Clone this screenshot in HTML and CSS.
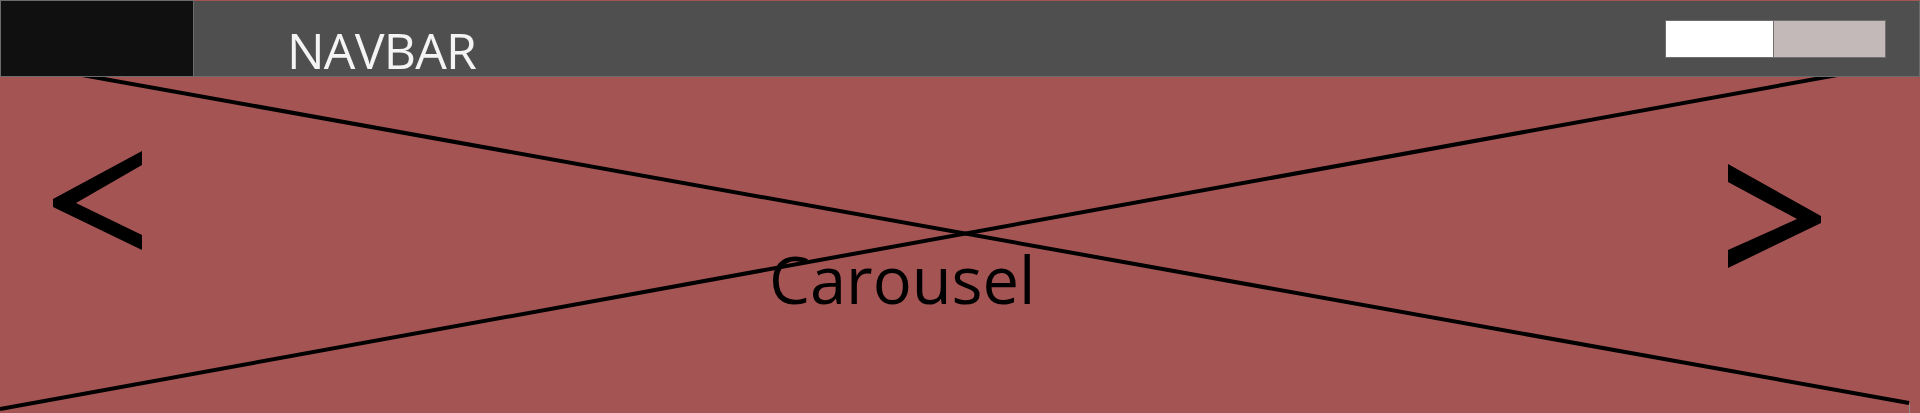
FILE: index.html
```html
<!DOCTYPE html>
<html lang="en">
<head>
<meta charset="utf-8">
<title>Wireframe</title>
<link rel="stylesheet" href="styles.css">
</head>
<body>
<header class="header">
  <div class="logo"></div>
  <nav class="nav">
    <div class="nav-title">NAVBAR</div>
    <div class="nav-buttons">
      <div class="btn btn-light"></div>
      <div class="btn btn-grey"></div>
    </div>
  </nav>
</header>
<section class="carousel">
  <svg class="arrow arrow-left" width="89" height="100" viewBox="53 150 89 100" aria-hidden="true">
    <polygon points="142,151 53,199 53,207 142,250 142,235 76,203 142,165" fill="#000"/>
  </svg>
  <div class="caption-area">
    <div class="caption">Carousel</div>
  </div>
  <svg class="arrow arrow-right" width="93" height="104" viewBox="1728 164 93 104" aria-hidden="true">
    <polygon points="1728,164 1821,216 1821,223 1728,268 1728,250 1797,219 1728,182" fill="#000"/>
  </svg>
  <svg class="cross" width="1920" height="336" viewBox="0 0 1920 336" aria-hidden="true">
    <line x1="0" y1="-16.7" x2="1909" y2="326" stroke="#000" stroke-width="4"/>
    <line x1="0" y1="332" x2="1920" y2="-17" stroke="#000" stroke-width="4"/>
    <line x1="1909.5" y1="327" x2="1909.5" y2="336" stroke="#8a8a8a" stroke-width="1"/>
  </svg>
</section>
</body>
</html>
```
FILE: styles.css
```css
html, body {
  margin: 0;
  padding: 0;
}
body {
  width: 1920px;
  height: 413px;
  overflow: hidden;
  background: #a55454;
  font-family: "Open Sans", "Noto Sans", sans-serif;
}
.header {
  display: flex;
  height: 77px;
}
.logo {
  box-sizing: border-box;
  width: 194px;
  height: 77px;
  background: #101010;
  border: 1px solid #6b6b6b;
}
.nav {
  box-sizing: border-box;
  flex: 1;
  height: 77px;
  display: flex;
  align-items: flex-start;
  justify-content: space-between;
  background: #4f4f4f;
  border-top: 1px solid #a55454;
  border-right: 1px solid #6b6b6b;
  border-bottom: 1px solid #6b6b6b;
  padding-left: 93px;
  padding-right: 33px;
}
.nav-title {
  padding-top: 24px;
  font-size: 50px;
  line-height: 50px;
  letter-spacing: -0.8px;
  color: #f4f4f4;
}
.nav-buttons {
  display: flex;
  margin-top: 19px;
}
.btn {
  box-sizing: border-box;
  height: 38px;
  border: 1px solid #6f6f6f;
}
.btn-light {
  width: 109px;
  background: #ffffff;
}
.btn-grey {
  width: 113px;
  margin-left: -1px;
  background: #c3b9b9;
}
.carousel {
  position: relative;
  display: flex;
  align-items: flex-start;
  height: 336px;
  overflow: hidden;
}
.arrow {
  display: block;
  flex: none;
}
.arrow-left {
  margin-left: 53px;
  margin-top: 73px;
}
.arrow-right {
  margin-top: 87px;
  margin-right: 99px;
}
.caption-area {
  flex: 1;
  padding-left: 627px;
  padding-top: 170px;
}
.caption {
  font-size: 65px;
  line-height: 65px;
  color: #000;
  white-space: nowrap;
}
.cross {
  position: absolute;
  left: 0;
  top: 0;
  pointer-events: none;
}
```
